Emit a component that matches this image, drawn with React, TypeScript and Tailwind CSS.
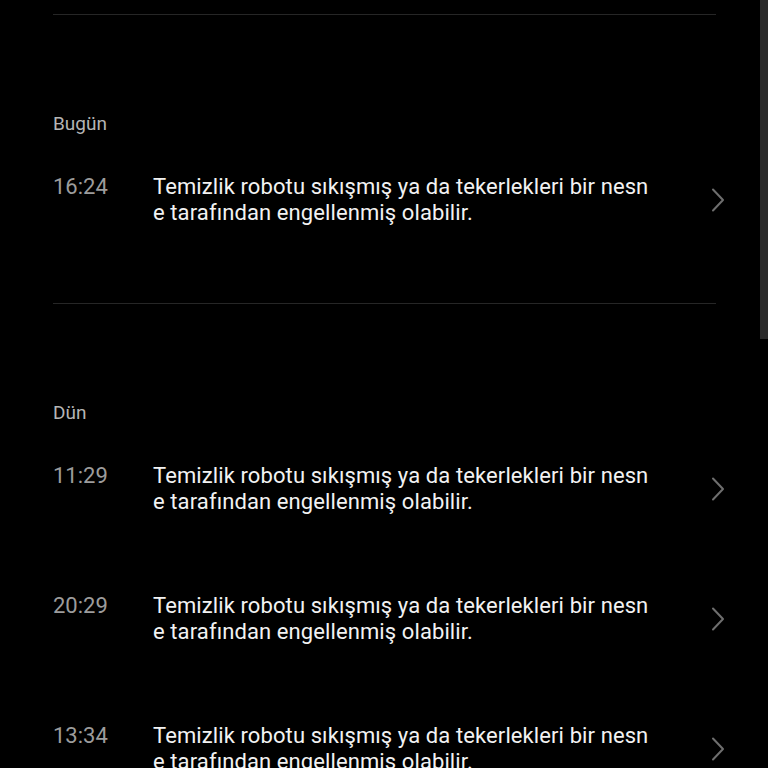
import React from "react";

const MSG1 = "Temizlik robotu sıkışmış ya da tekerlekleri bir nesn";
const MSG2 = "e tarafından engellenmiş olabilir.";

function Chevron() {
  return (
    <svg width="14" height="24" viewBox="0 0 14 24" fill="none" className="shrink-0">
      <path d="M2 1.5 L12 12 L2 22.5" stroke="#6e6e6e" strokeWidth="2" strokeLinecap="round" strokeLinejoin="round" />
    </svg>
  );
}

function Item({ time }: { time: string }) {
  return (
    <div className="h-[130px] pt-[38px]">
      <div className="flex items-center">
        <div className="w-[100px] pl-[53px] box-content shrink-0 self-start text-[22px] leading-[26px] text-[#9c9c9c]">
          {time}
        </div>
        <div className="flex-1 text-[22px] leading-[26px] tracking-[0.1px] text-[#f2f2f2]">
          <div className="whitespace-nowrap">{MSG1}</div>
          <div className="whitespace-nowrap">{MSG2}</div>
        </div>
        <div className="w-[14px] mr-[43px] ml-2 flex items-center">
          <Chevron />
        </div>
      </div>
    </div>
  );
}

function Section({ title, times }: { title: string; times: string[] }) {
  return (
    <div>
      <div className="mx-[53px] w-[663px] h-px bg-[#262626]" />
      <div className="mt-[97px] pl-[53px] text-[19px] leading-[24px] text-[#b5b5b5]">{title}</div>
      {times.map((t, i) => (
        <Item key={i} time={t} />
      ))}
      <div className="h-[37px]" />
    </div>
  );
}

export default function App() {
  return (
    <div
      className="relative w-[768px] h-[768px] overflow-hidden bg-black"
      style={{ fontFamily: "Roboto, 'Noto Sans', 'Liberation Sans', sans-serif" }}
    >
      <div className="pt-[14px]">
        <Section title="Bugün" times={["16:24"]} />
        <Section title="Dün" times={["11:29", "20:29", "13:34"]} />
      </div>
      <div className="absolute top-0 right-0 w-[8px] h-[339px] bg-[#2a2a2a]" />
    </div>
  );
}
